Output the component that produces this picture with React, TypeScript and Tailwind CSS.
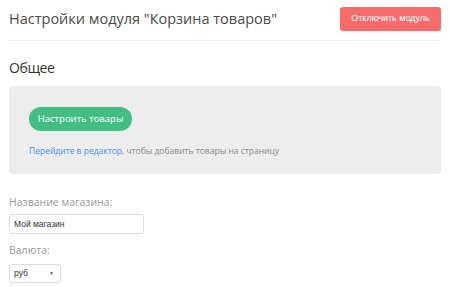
import React from 'react';

export default function App() {
  return (
    <div
      className="w-[450px] h-[287px] overflow-hidden bg-white px-[9px]"
      style={{ fontFamily: '"Open Sans", sans-serif' }}
    >
      {/* Header */}
      <div className="flex items-center justify-between h-[41px] border-b border-[#f0f0f0]">
        <h1 className="text-[14.5px] text-[#4a4a4a] leading-none mt-[-2px]">
          Настройки модуля "Корзина товаров"
        </h1>
        <button
          className="h-[24px] w-[101px] rounded-[3px] bg-[#f76b6b] text-white text-[9px] mt-[-3px]"
          style={{ fontFamily: '"Liberation Sans", Arial, sans-serif' }}
        >
          Отключить модуль
        </button>
      </div>

      {/* General */}
      <h2 className="text-[14px] tracking-[-0.4px] text-[#333] leading-none mt-[20px]">Общее</h2>

      <div className="mt-[11px] h-[88px] rounded-[4px] bg-[#ededed] px-[20px] pt-[18px]">
        <button className="h-[24px] w-[103px] rounded-full bg-[#42bd84] text-white text-[9.5px]">
          Настроить товары
        </button>
        <p className="mt-[16px] text-[8.5px] text-[#888] leading-none">
          <span className="text-[#4a8ee6]">Перейдите в редактор</span>, чтобы добавить товары на страницу
        </p>
      </div>

      {/* Form */}
      <div className="mt-[23px] text-[10.5px] text-[#999] leading-none">Название магазина:</div>
      <input
        className="mt-[6px] block w-[135px] h-[20px] rounded-[3px] border border-[#ddd] px-[4px] text-[8.5px] text-[#333] outline-none"
        style={{ fontFamily: '"Liberation Sans", Arial, sans-serif' }}
        defaultValue="Мой магазин"
      />
      <div className="mt-[11px] text-[10.5px] text-[#999] leading-none">Валюта:</div>
      <div
        className="mt-[9px] flex items-center justify-between w-[52px] h-[19px] rounded-[3px] border border-[#ddd] pl-[4px] pr-[6px] text-[8.5px] text-[#333]"
        style={{ fontFamily: '"Liberation Sans", Arial, sans-serif' }}
      >
        <span>руб</span>
        <span className="text-[5px] text-[#555]">▼</span>
      </div>
    </div>
  );
}
